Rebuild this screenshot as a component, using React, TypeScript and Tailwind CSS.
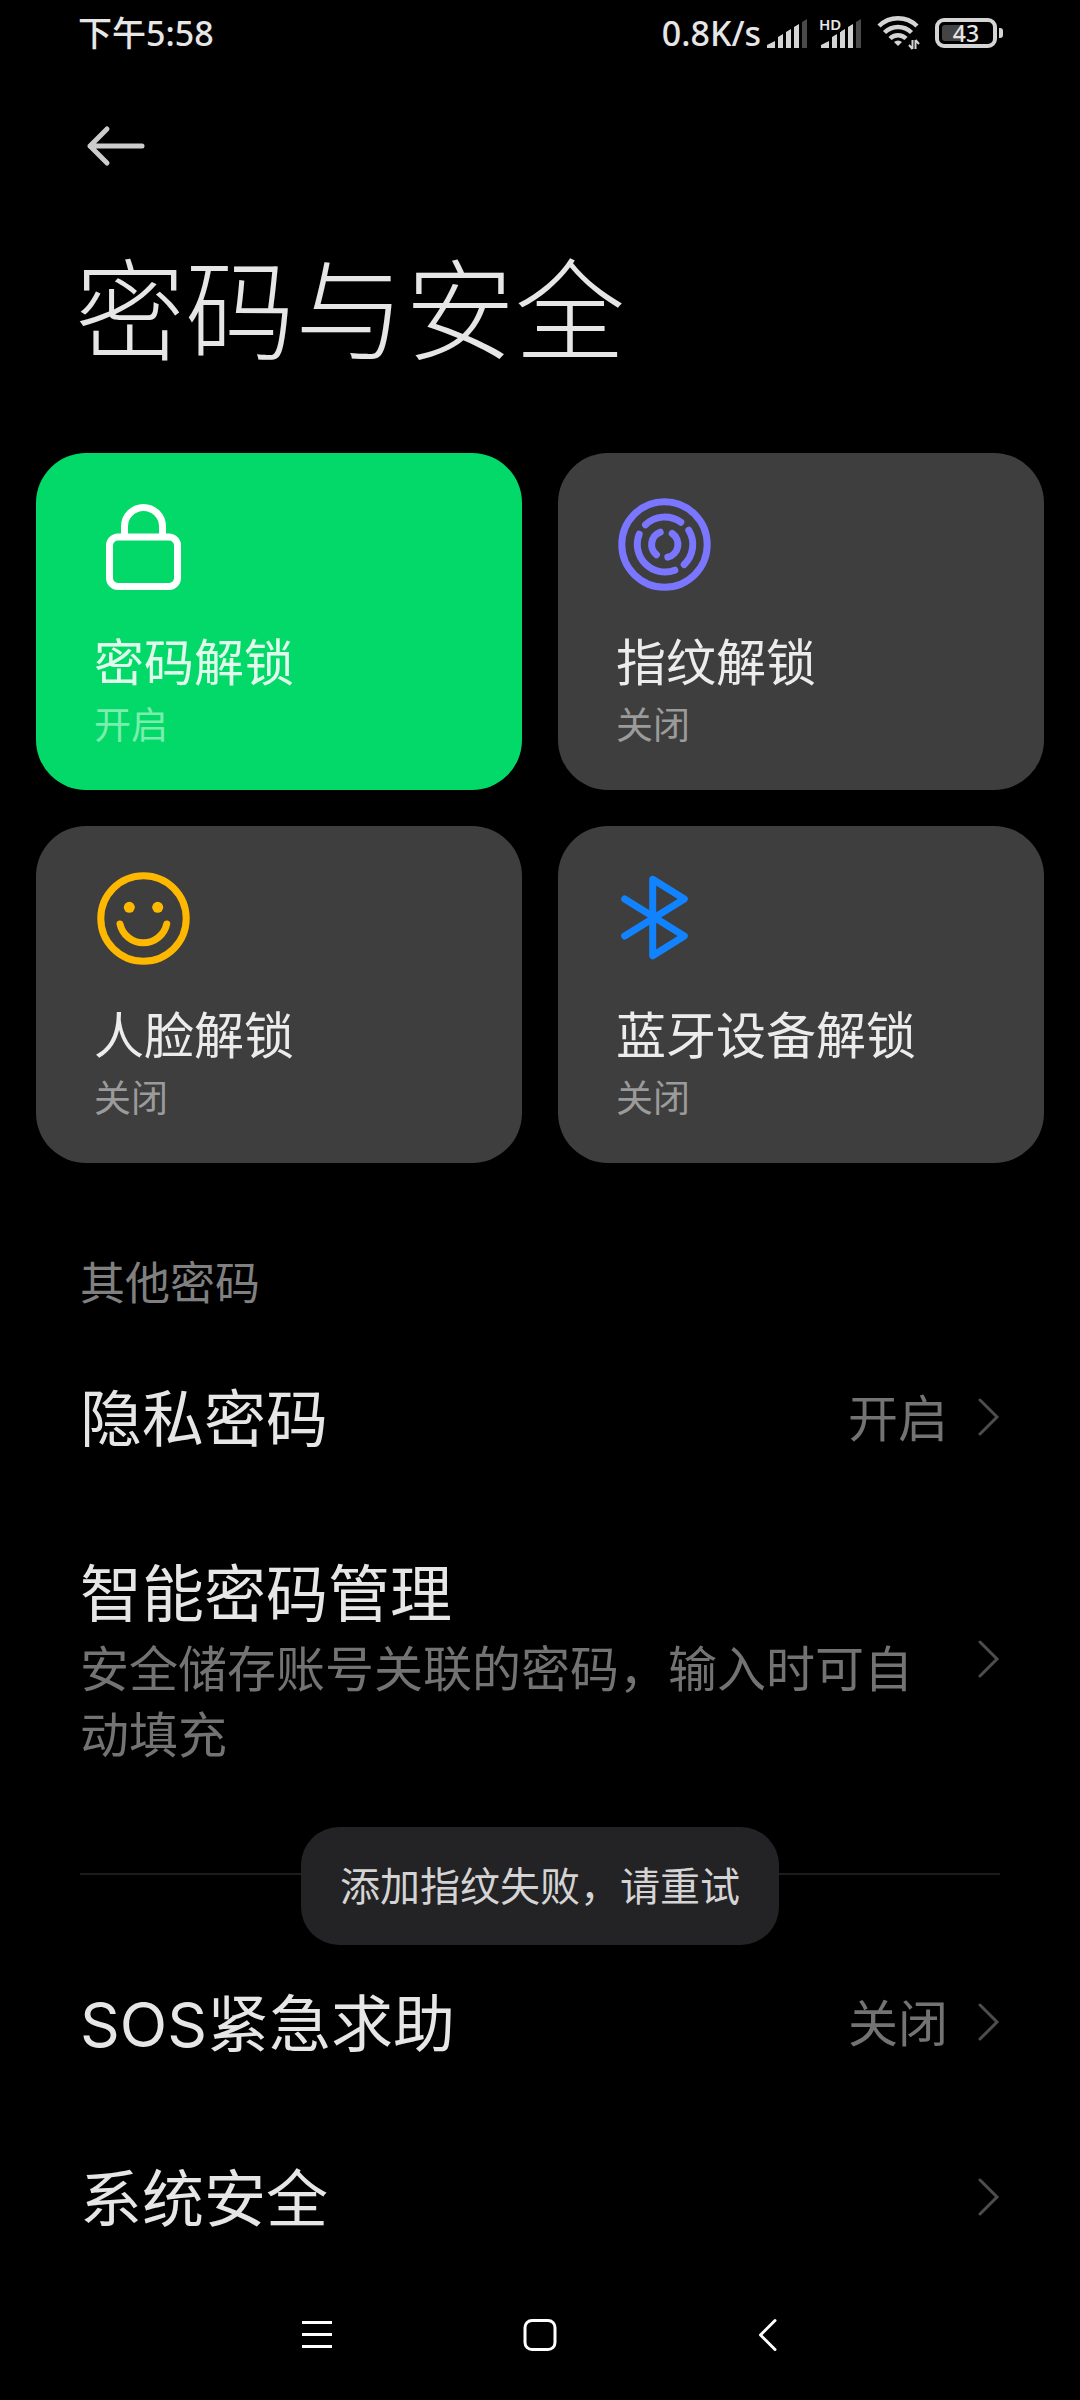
import type { ReactNode } from "react";

function SignalBars() {
  return (
    <>
      <path d="M0 29V26L8 22V29Z" fill="#d4d4d4" />
      <path d="M11 29V18L16 15V29Z" fill="#d4d4d4" />
      <path d="M19 29V13L24 10V29Z" fill="#d4d4d4" />
      <path d="M27 29V8L32 5V29Z" fill="#d4d4d4" />
      <path d="M35 29V3L40 0V29Z" fill="#4a4a4a" />
    </>
  );
}

function WifiIcon() {
  return (
    <svg width="44" height="36" viewBox="0 0 44 36" fill="none" stroke="#d4d4d4" strokeWidth="4.500" aria-label="WLAN">
      <path d="M2 11A27 27 0 0 1 40 11" />
      <path d="M7.500 17.500A19.500 19.500 0 0 1 34.500 17.500" />
      <path d="M13 23.500A11.500 11.500 0 0 1 29 23.500" />
      <path d="M21 31L17 27A6 6 0 0 1 25 27Z" fill="#d4d4d4" stroke="none" />
      <path d="M35.500 25V34M35.500 34L32 30M38.500 34V25M38.500 25L42 29" strokeWidth="2" />
    </svg>
  );
}

function Battery() {
  return (
    <div className="flex items-center gap-[2px]" role="img" aria-label="电量 43%">
      <div className="relative flex h-[30px] w-[62px] items-center justify-center rounded-[9px] border-4 border-[#d4d4d4]">
        <div className="absolute inset-y-[3px] left-[3px] w-[20px] rounded-[3px] bg-[#444444]" />
        <span className="relative font-[Noto_Sans] text-[23px] leading-[22px] font-medium text-[#e6e6e6]">43</span>
      </div>
      <div className="h-[10px] w-1 rounded-r-[3px] bg-[#d4d4d4]" />
    </div>
  );
}

function StatusBar() {
  return (
    <div className="flex h-[66px] items-center justify-between pr-[77px] pl-[78px] text-[34px] leading-[40px] font-medium text-[#e6e6e6]">
      <time>下午5:58</time>
      <div className="flex items-center">
        <span className="mr-[6px]">0.8K/s</span>
        <svg width="40" height="29" viewBox="0 0 40 29" aria-label="信号">
          <SignalBars />
        </svg>
        <div className="relative ml-[14px]">
          <svg width="40" height="29" viewBox="0 0 40 29" aria-label="信号">
            <SignalBars />
          </svg>
          <span className="absolute -top-[1px] -left-[2px] bg-black pb-px text-[15px] leading-[13px] font-semibold">HD</span>
        </div>
        <div className="ml-[16px]">
          <WifiIcon />
        </div>
        <div className="ml-[14px]">
          <Battery />
        </div>
      </div>
    </div>
  );
}

const iconProps = {
  width: 100,
  height: 100,
  viewBox: "0 0 100 100",
  fill: "none",
  strokeWidth: 7,
  strokeLinecap: "round" as const,
  strokeLinejoin: "round" as const,
  "aria-hidden": true,
};

function LockIcon() {
  return (
    <svg {...iconProps} stroke="#ffffff">
      <rect x="15.500" y="42" width="68" height="49.500" rx="8.500" />
      <path d="M30.500 41V31.500A19 19 0 0 1 68.500 31.500V41" />
    </svg>
  );
}

function FingerprintIcon() {
  return (
    <svg {...iconProps} stroke="#7a76ff">
      <circle cx="48.500" cy="49.500" r="42.700" />
      <path d="M29.500 29.800A27.700 27.700 0 0 1 64.800 27.200" />
      <path d="M72.800 35.200A27.700 27.700 0 0 1 68.200 69.500" />
      <path d="M58.800 75.200A27.700 27.700 0 0 1 23.200 39.200" />
      <path d="M44.200 37.200A13.200 13.200 0 0 0 40.500 59.800" />
      <path d="M56.200 38.500A13.200 13.200 0 0 1 51.800 62.200" />
    </svg>
  );
}

function FaceIcon() {
  return (
    <svg {...iconProps} stroke="#ffb800">
      <circle cx="49.500" cy="50.500" r="42.700" />
      <circle cx="35.300" cy="39.300" r="5.500" fill="#ffb800" stroke="none" />
      <circle cx="63.700" cy="39.300" r="5.500" fill="#ffb800" stroke="none" />
      <path d="M26 56A23.900 23.900 0 0 0 72.700 56" />
    </svg>
  );
}

function BluetoothIcon() {
  return (
    <svg {...iconProps} stroke="#1283ff">
      <path d="M8.700 31L68.300 68L36.700 87.700V11.300L68.300 31L8.700 68" />
    </svg>
  );
}

function Chevron() {
  return (
    <svg className="shrink-0" width="22" height="38" viewBox="0 0 22 38" fill="none" stroke="#4d4d4d" strokeWidth="3" strokeLinecap="round" aria-hidden="true">
      <path d="M2 2L19 19L2 36" />
    </svg>
  );
}

type CardProps = { icon: ReactNode; title: string; status: string; active?: boolean };

function UnlockCard({ icon, title, status, active }: CardProps) {
  return (
    <button
      className={`flex flex-col items-start rounded-[50px] px-[58px] pt-[42px] pb-[35px] text-left ${
        active ? "bg-[#03d968]" : "bg-[#3e3e3e]"
      }`}
    >
      {icon}
      <span className={`mt-[34px] text-[50px] leading-[66px] ${active ? "text-[#e0fbec]" : "text-[#ececec]"}`}>{title}</span>
      <span className={`text-[37px] leading-[60px] ${active ? "text-[#7beeae]" : "text-[#9b9b9b]"}`}>{status}</span>
    </button>
  );
}

type RowProps = { title: string; detail?: string; value?: string };

function SettingRow({ title, detail, value }: RowProps) {
  return (
    <li>
      <button className="flex w-full items-center justify-between px-20 py-[41px] text-left">
        <span className="flex min-w-0 flex-1 flex-col pt-[6px]">
          <span className="font-['Inter','Noto_Sans_CJK_SC',sans-serif] text-[62px] leading-[87px] text-[#e6e6e6]">{title}</span>
          {detail && <span className="-mt-[3px] pb-[6px] text-[49px] leading-[66px] text-[#737373]">{detail}</span>}
        </span>
        {value && <span className="pt-[2px] text-[50px] leading-[66px] text-[#737373]">{value}</span>}
        <span className="ml-[30px]">
          <Chevron />
        </span>
      </button>
    </li>
  );
}

export default function App() {
  return (
    <div
      lang="zh-CN"
      className="flex min-h-screen flex-col bg-black font-['Noto_Sans','Noto_Sans_CJK_SC',sans-serif] text-[#e6e6e6]"
    >
      <StatusBar />

      <header>
        <div className="flex h-[160px] items-center px-[85px]">
          <button aria-label="返回">
            <svg width="60" height="42" viewBox="0 0 60 42" fill="none" stroke="#cccccc" strokeWidth="5" strokeLinecap="round" strokeLinejoin="round">
              <path d="M22 4L5 21L22 38M5 21H57" />
            </svg>
          </button>
        </div>
        <h1 className="mt-[17px] px-[75px] text-[110px] leading-[132px] font-extralight">密码与安全</h1>
      </header>

      <main className="flex-1">
        <section className="mt-[78px] grid grid-cols-2 gap-9 px-9">
          <UnlockCard icon={<LockIcon />} title="密码解锁" status="开启" active />
          <UnlockCard icon={<FingerprintIcon />} title="指纹解锁" status="关闭" />
          <UnlockCard icon={<FaceIcon />} title="人脸解锁" status="关闭" />
          <UnlockCard icon={<BluetoothIcon />} title="蓝牙设备解锁" status="关闭" />
        </section>

        <section className="mt-[87px]">
          <h2 className="px-20 text-[45px] leading-[66px] text-[#808080]">其他密码</h2>
          <ul className="mt-[13px]">
            <SettingRow title="隐私密码" value="开启" />
            <SettingRow title="智能密码管理" detail="安全储存账号关联的密码，输入时可自动填充" />
          </ul>
          <hr className="mx-20 my-[59px] border-t-2 border-[#1c1c1c]" />
          <ul>
            <SettingRow title="SOS紧急求助" value="关闭" />
            <SettingRow title="系统安全" />
          </ul>
        </section>
      </main>

      <nav className="mx-auto grid w-5/8 grid-cols-3 pt-[30px] pb-[45px]">
        <button className="flex justify-center" aria-label="最近任务">
          <svg width="40" height="40" viewBox="0 0 40 40" stroke="#ffffff" strokeWidth="3">
            <path d="M7 7.500H37M7 19.500H37M7 31.500H37" />
          </svg>
        </button>
        <button className="flex justify-center" aria-label="主屏幕">
          <svg width="40" height="40" viewBox="0 0 40 40" fill="none" stroke="#ffffff" strokeWidth="3">
            <rect x="5" y="5.500" width="30" height="29" rx="7" />
          </svg>
        </button>
        <button className="flex justify-center" aria-label="返回上一级">
          <svg width="40" height="40" viewBox="0 0 40 40" fill="none" stroke="#ffffff" strokeWidth="3" strokeLinecap="round" strokeLinejoin="round">
            <path d="M30 5.500L15.500 20L30 34.500" />
          </svg>
        </button>
      </nav>

      <div className="pointer-events-none fixed inset-x-0 bottom-[455px] flex justify-center">
        <p role="status" className="rounded-[38px] bg-[#232325] px-[39px] py-[29px] text-[40px] leading-[60px] text-[#d4d4d4]">
          添加指纹失败，请重试
        </p>
      </div>
    </div>
  );
}
